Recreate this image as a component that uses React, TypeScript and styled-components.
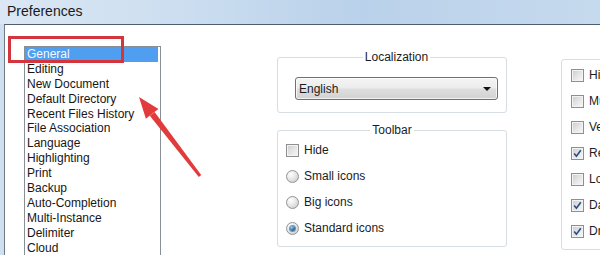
import React from 'react';
import styled, { createGlobalStyle } from 'styled-components';

const GlobalStyle = createGlobalStyle`
  html, body {
    margin: 0;
    padding: 0;
    background: #ffffff;
  }
  body {
    font-family: "Liberation Sans", Arial, sans-serif;
  }
`;

const Window = styled.div`
  position: relative;
  width: 600px;
  height: 255px;
  overflow: hidden;
  display: flex;
  flex-direction: column;
  background: #cfdff0;
  font-family: "Liberation Sans", Arial, sans-serif;
  font-size: 12px;
  color: #1c1c1c;
`;

const TitleBar = styled.div`
  height: 24px;
  flex-shrink: 0;
  display: flex;
  align-items: center;
  padding-left: 7px;
  padding-bottom: 2px;
  box-sizing: border-box;
  background: linear-gradient(90deg, #dbe7f4 0%, #c9dcef 35%, #b9d1ea 60%, #c6daee 100%);
  font-size: 14px;
  color: #1a1a1a;
`;

const Frame = styled.div`
  flex: 1;
  display: flex;
  padding-left: 4px;
  min-height: 0;
`;

const Client = styled.div`
  flex: 1;
  display: flex;
  align-items: flex-start;
  padding: 21px 0 0 19px;
  background: #ffffff;
  border-top: 1px solid #4f5d6d;
  border-left: 1px solid #6d7a88;
  min-height: 0;
`;

const ListBox = styled.ul`
  list-style: none;
  margin: 0;
  padding: 0 2px 0 0;
  width: 137px;
  box-sizing: border-box;
  align-self: stretch;
  flex-shrink: 0;
  border: 1px solid #8a8f96;
  border-bottom: none;
`;

const ListItem = styled.li<{ $selected?: boolean }>`
  height: 14.9px;
  line-height: 14.9px;
  padding-left: 2px;
  white-space: nowrap;
  background: ${({ $selected }) => ($selected ? '#4f9ef0' : 'transparent')};
  color: ${({ $selected }) => ($selected ? '#f2f8ff' : '#161616')};
`;

const MiddleColumn = styled.div`
  width: 230px;
  flex-shrink: 0;
  margin: 4px 0 0 116px;
  display: flex;
  flex-direction: column;
  gap: 10px;
`;

const GroupBox = styled.fieldset<{ $pad: string }>`
  margin: 0;
  padding: ${({ $pad }) => $pad};
  min-inline-size: 0;
  border: 1px solid #d6dde3;
  border-radius: 3px;
`;

const GroupTitle = styled.legend`
  margin: 0 auto;
  padding: 0 2px;
  font-size: 12px;
  line-height: 14px;
  color: #1c1c1c;
`;

const Combo = styled.div`
  height: 23px;
  box-sizing: border-box;
  display: flex;
  align-items: center;
  justify-content: space-between;
  padding: 0 6px 0 3px;
  border: 1px solid #707070;
  border-radius: 3px;
  background: linear-gradient(#f4f4f4 0%, #ececec 48%, #dedede 52%, #d2d2d2 100%);
  box-shadow: inset 0 0 0 1px rgba(255, 255, 255, 0.7);
`;

const ComboArrow = styled.span`
  width: 0;
  height: 0;
  border-left: 4px solid transparent;
  border-right: 4px solid transparent;
  border-top: 4px solid #111;
`;

const OptionList = styled.div<{ $offset?: number }>`
  display: flex;
  flex-direction: column;
  margin-top: ${({ $offset }) => $offset ?? 0}px;
`;

const OptionRow = styled.label`
  height: 26px;
  display: flex;
  align-items: center;
  gap: 5px;
  white-space: nowrap;
  font-size: 12px;
`;

const CheckBox = styled.span`
  width: 13px;
  height: 13px;
  box-sizing: border-box;
  flex-shrink: 0;
  display: flex;
  align-items: center;
  justify-content: center;
  border: 1px solid #8e8f8f;
  background: linear-gradient(135deg, #cbcbcb 0%, #e9e9e9 60%, #f8f8f8 100%);
  box-shadow: inset 0 0 0 1px #f3f3f3;
`;

const Radio = styled.span<{ $checked?: boolean }>`
  width: 13px;
  height: 13px;
  box-sizing: border-box;
  flex-shrink: 0;
  border-radius: 50%;
  border: 1px solid #929394;
  display: flex;
  align-items: center;
  justify-content: center;
  background: radial-gradient(circle at 35% 30%, #ffffff 0%, #e8e8e8 45%, #c4c4c4 100%);

  &::after {
    content: '';
    display: ${({ $checked }) => ($checked ? 'block' : 'none')};
    width: 5px;
    height: 5px;
    border-radius: 50%;
    background: radial-gradient(circle at 35% 30%, #8fd0f7 0%, #2f6fae 55%, #163f6d 100%);
    box-shadow: 0 0 0 1px #6b95bd;
  }
`;

const RightGroup = styled(GroupBox)`
  width: 230px;
  flex-shrink: 0;
  margin: 6px 0 0 54px;
`;

const Highlight = styled.div`
  position: absolute;
  left: 8px;
  top: 36px;
  width: 116px;
  height: 27px;
  box-sizing: border-box;
  border: 3px solid #d4343b;
  pointer-events: none;
`;

const Overlay = styled.svg`
  position: absolute;
  left: 0;
  top: 0;
  pointer-events: none;
`;

const categories = [
  'General',
  'Editing',
  'New Document',
  'Default Directory',
  'Recent Files History',
  'File Association',
  'Language',
  'Highlighting',
  'Print',
  'Backup',
  'Auto-Completion',
  'Multi-Instance',
  'Delimiter',
  'Cloud',
];

const tabBarOptions = [
  { label: 'Hide', checked: false },
  { label: 'Multi-line', checked: false },
  { label: 'Vertical', checked: false },
  { label: 'Reduce', checked: true },
  { label: 'Lock (no drag and drop)', checked: false },
  { label: 'Darken inactive tabs', checked: true },
  { label: 'Draw a coloured bar on active tab', checked: true },
];

const Check: React.FC<{ checked?: boolean }> = ({ checked }) => (
  <CheckBox>
    {checked && (
      <svg width="9" height="9" viewBox="0 0 9 9">
        <path d="M1.2 4.6 L3.4 7.2 L7.8 1.2" fill="none" stroke="#2a4e86" strokeWidth="1.6" />
      </svg>
    )}
  </CheckBox>
);

const App: React.FC = () => {
  return (
    <>
      <GlobalStyle />
      <Window>
        <TitleBar>Preferences</TitleBar>
        <Frame>
          <Client>
            <ListBox>
              {categories.map((name, index) => (
                <ListItem key={name} $selected={index === 0}>
                  {name}
                </ListItem>
              ))}
            </ListBox>

            <MiddleColumn>
              <GroupBox $pad="13px 8px 12px 17px">
                <GroupTitle>Localization</GroupTitle>
                <Combo>
                  <span>English</span>
                  <ComboArrow />
                </Combo>
              </GroupBox>

              <GroupBox $pad="0 8px 5px 8px">
                <GroupTitle>Toolbar</GroupTitle>
                <OptionList>
                  <OptionRow>
                    <Check />
                    Hide
                  </OptionRow>
                  <OptionRow>
                    <Radio />
                    Small icons
                  </OptionRow>
                  <OptionRow>
                    <Radio />
                    Big icons
                  </OptionRow>
                  <OptionRow>
                    <Radio $checked />
                    Standard icons
                  </OptionRow>
                </OptionList>
              </GroupBox>
            </MiddleColumn>

            <RightGroup $pad="0 8px 5px 9px">
              <GroupTitle>Tab Bar</GroupTitle>
              <OptionList $offset={-4}>
                {tabBarOptions.map((opt) => (
                  <OptionRow key={opt.label}>
                    <Check checked={opt.checked} />
                    {opt.label}
                  </OptionRow>
                ))}
              </OptionList>
            </RightGroup>
          </Client>
        </Frame>

        <Highlight />
        <Overlay width="600" height="255" viewBox="0 0 600 255">
          <polygon
            points="201.2,175.1 198.8,176.9 149.8,115.7 154.6,112.1"
            fill="#e23b3b"
          />
          <polygon points="139,97 158.5,109 152.4,113.4 145.9,118.8" fill="#e23b3b" />
        </Overlay>
      </Window>
    </>
  );
};

export default App;
